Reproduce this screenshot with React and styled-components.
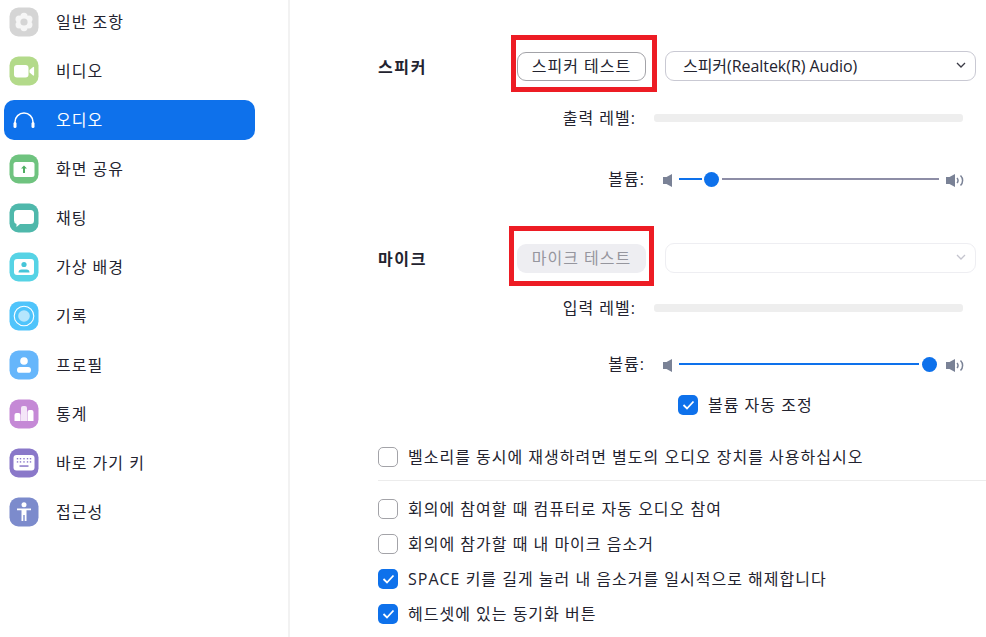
import React from 'react';
import styled, { createGlobalStyle } from 'styled-components';

const Global = createGlobalStyle`
  html, body { margin: 0; padding: 0; background: #fff; height: 637px; overflow: hidden; }
  body { font-family: "Open Sans", "Noto Sans CJK KR", sans-serif; font-size: 16px; color: #23232f; }
  * { box-sizing: border-box; }
`;

const Page = styled.div`
  display: flex;
  width: 986px;
  height: 637px;
  overflow: hidden;
`;

const Sidebar = styled.nav`
  width: 290px;
  flex: none;
  border-right: 2px solid #f2f2f2;
  padding: 2px 33px 0 4px;
  display: flex;
  flex-direction: column;
  gap: 9px;
`;

const NavItem = styled.div`
  height: 40px;
  flex: none;
  display: flex;
  align-items: center;
  gap: 17px;
  padding-left: 5px;
  border-radius: 10px;
  background: ${p => (p.$active ? '#0e71eb' : 'transparent')};
  color: ${p => (p.$active ? '#fff' : '#23232f')};
  letter-spacing: 1px;
`;

const NavLabel = styled.span`
  margin-top: -2px;
`;

const IconSvg = styled.svg`
  width: 30px;
  height: 30px;
  flex: none;
  display: block;
`;

const Main = styled.main`
  flex: 1;
  padding: 51px 10px 0 88px;
  display: flex;
  flex-direction: column;
`;

const Row = styled.div`
  height: 30px;
  flex: none;
  display: flex;
  align-items: center;
  margin-top: ${p => p.$top || 0}px;
`;

const SectionLabel = styled.div`
  width: 139px;
  flex: none;
  font-weight: 700;
  letter-spacing: 1.6px;
`;

const ButtonWrap = styled.div`
  position: relative;
  width: 129px;
  height: 29px;
  flex: none;
  margin-right: 19px;
`;

const TestButton = styled.button`
  width: 100%;
  height: 100%;
  padding: 0 0 2px;
  font: inherit;
  letter-spacing: 1px;
  border-radius: 9px;
  border: ${p => (p.disabled ? '0' : '1px solid #a3a3a8')};
  background: ${p => (p.disabled ? '#eeeef2' : '#fff')};
  color: ${p => (p.disabled ? '#96969e' : '#23232f')};
`;

const RedBox = styled.div`
  position: absolute;
  left: ${p => p.$left}px;
  top: ${p => p.$top}px;
  width: ${p => p.$w}px;
  height: ${p => p.$h}px;
  border: 5px solid #ed1c24;
  pointer-events: none;
`;

const Select = styled.div`
  flex: none;
  width: 311px;
  height: 30px;
  border: 1px solid ${p => (p.$disabled ? '#eeeef2' : '#c9c9d3')};
  border-radius: 9px;
  display: flex;
  align-items: center;
  justify-content: space-between;
  padding: 0 9px 2px 17px;
  letter-spacing: -0.05px;
`;

const FieldLabel = styled.div`
  width: ${p => p.$w}px;
  flex: none;
  text-align: right;
  letter-spacing: 1px;
  margin-top: -2px;
`;

const LevelBar = styled.div`
  width: 309px;
  height: 8px;
  margin-left: 18px;
  border-radius: 3px;
  background: #eeeeee;
`;

const Slider = styled.div`
  display: flex;
  align-items: center;
  margin-left: 18px;
`;

const VolIcon = styled.svg`
  flex: none;
  display: block;
  height: 13px;
  margin-top: 2px;
`;

const Track = styled.div`
  width: 260px;
  height: 16px;
  margin: 0 6.5px 0 7px;
  display: flex;
  align-items: center;
`;

const TrackFill = styled.div`
  height: 2.5px;
  background: ${p => (p.$on ? '#0e71eb' : '#8d8da6')};
  flex: ${p => (p.$grow ? 1 : 'none')};
`;

const Thumb = styled.div`
  width: 15px;
  height: 15px;
  border-radius: 50%;
  background: #0e71eb;
  flex: none;
  margin: 0 2.5px;
`;

const Box = styled.span`
  width: 20px;
  height: 20px;
  flex: none;
  border-radius: 5px;
  border: ${p => (p.$on ? '0' : '1.5px solid #a3a3a8')};
  background: ${p => (p.$on ? '#0e71eb' : '#fff')};
  display: flex;
  align-items: center;
  justify-content: center;
`;

const CheckRow = styled(Row)`
  gap: 10px;
  padding-left: ${p => p.$indent || 0}px;
  letter-spacing: 1px;
`;

const CheckText = styled.span`
  margin-top: -2px;
`;

const Divider = styled.div`
  height: 1px;
  flex: none;
  margin: 8px -10px 13px 0;
  background: #ececec;
`;

const Tile = ({ color, children }) => (
  <IconSvg viewBox="0 0 30 30">
    <rect x="0.5" y="0.5" width="29" height="29" rx="9" fill={color} />
    {children}
  </IconSvg>
);

const petals = [0, 60, 120, 180, 240, 300];
const icons = {
  gear: (
    <Tile color="#d5d5d5">
      {petals.map(a => (
        <circle key={a} cx={15 + 5.6 * Math.cos((a * Math.PI) / 180 + Math.PI / 6)} cy={15 + 5.6 * Math.sin((a * Math.PI) / 180 + Math.PI / 6)} r="3.6" fill="#f6f6f6" />
      ))}
      <circle cx="15" cy="15" r="7" fill="#f6f6f6" />
      <circle cx="15" cy="15" r="3.6" fill="#d5d5d5" />
    </Tile>
  ),
  video: (
    <Tile color="#b3da8a">
      <rect x="5" y="9" width="14.5" height="12.5" rx="3" fill="#fff" />
      <path d="M20.5 14l3.6-3a.6.6 0 0 1 1 .5v7.5a.6.6 0 0 1-1 .5l-3.6-3z" fill="#fff" />
    </Tile>
  ),
  headphones: (
    <IconSvg viewBox="0 0 30 30">
      <path d="M6 19v-2a9 9 0 0 1 18 0v2" fill="none" stroke="#fff" strokeWidth="1.5" />
      <rect x="4.500" y="17" width="3" height="6" rx="1.500" fill="#fff" />
      <rect x="22.500" y="17" width="3" height="6" rx="1.500" fill="#fff" />
    </IconSvg>
  ),
  share: (
    <Tile color="#6fc37f">
      <rect x="4.500" y="8" width="21" height="15" rx="2.500" fill="#fff" />
      <path d="M15 11.500l3 3h-2v4.500h-2v-4.500h-2z" fill="#4fae62" />
    </Tile>
  ),
  chat: (
    <Tile color="#4fb8ab">
      <path d="M8.5 7h13A3.5 3.5 0 0 1 25 10.5v7a3.5 3.5 0 0 1-3.500 3.5H11l-3.500 3v-3.100A3.500 3.500 0 0 1 5 17.500v-7A3.500 3.500 0 0 1 8.500 7z" fill="#fff" />
    </Tile>
  ),
  background: (
    <Tile color="#56d3e5">
      <rect x="5" y="7" width="20" height="16" rx="3" fill="#fff" />
      <circle cx="15" cy="12.500" r="2.600" fill="#46c5d8" />
      <path d="M9.500 20.500a3 3 0 0 1 3-3h5a3 3 0 0 1 3 3z" fill="#46c5d8" />
    </Tile>
  ),
  record: (
    <Tile color="#4fc4fb">
      <circle cx="15" cy="15" r="9.800" fill="none" stroke="#fff" strokeWidth="1.100" />
      <circle cx="15" cy="15" r="5.800" fill="#b5e6fd" />
    </Tile>
  ),
  profile: (
    <Tile color="#66b6fb">
      <circle cx="15" cy="11" r="3.800" fill="#fff" />
      <rect x="8" y="17" width="14" height="5.800" rx="2.900" fill="#fff" />
    </Tile>
  ),
  stats: (
    <Tile color="#c589d6">
      <path d="M5.500 22v-6a2 2 0 0 1 2-2h2a2 2 0 0 1 2 2v6z" fill="#fff" />
      <path d="M12 22V9a2 2 0 0 1 2-2h2a2 2 0 0 1 2 2v13z" fill="#f4e6f8" />
      <path d="M18.500 22V13a2 2 0 0 1 2-2h2a2 2 0 0 1 2 2v9z" fill="#fff" />
    </Tile>
  ),
  keyboard: (
    <Tile color="#8a78c9">
      <rect x="4.500" y="7" width="21" height="15.500" rx="3" fill="#fff" />
      {[8.500, 11.500, 15, 18.500, 21.500].map(x => (
        <g key={x} fill="#8a78c9">
          <rect x={x - 0.700} y="10" width="1.400" height="1.400" />
          <rect x={x - 0.700} y="13.200" width="1.400" height="1.400" />
        </g>
      ))}
      <rect x="10.500" y="17.300" width="9" height="1.500" fill="#8a78c9" />
    </Tile>
  ),
  access: (
    <Tile color="#7c8bcc">
      <circle cx="15" cy="7.800" r="2.500" fill="#fff" />
      <path d="M8 11.500h14v1.800h-4.500V24h-1.800v-6h-1.400v6h-1.800V13.300H8z" fill="#fff" />
    </Tile>
  ),
};

const navItems = [
  ['gear', '일반 조항'],
  ['video', '비디오'],
  ['headphones', '오디오', true],
  ['share', '화면 공유'],
  ['chat', '채팅'],
  ['background', '가상 배경'],
  ['record', '기록'],
  ['profile', '프로필'],
  ['stats', '통계'],
  ['keyboard', '바로 가기 키'],
  ['access', '접근성'],
];

const Chevron = ({ color }) => (
  <svg width="10" height="6" viewBox="0 0 10 6">
    <path d="M1 1l4 4 4-4" fill="none" stroke={color} strokeWidth="1.300" />
  </svg>
);

const Tick = () => (
  <svg width="13" height="10" viewBox="0 0 13 10">
    <path d="M1.500 5l3.500 3.500L11.500 1.500" fill="none" stroke="#fff" strokeWidth="1.800" />
  </svg>
);

const SpeakerLow = () => (
  <VolIcon width="9" viewBox="0 0 9 13">
    <path d="M0 3h3.500L9 0v13L3.500 10H0z" fill="#7a8296" />
  </VolIcon>
);

const SpeakerHigh = () => (
  <VolIcon width="18" viewBox="0 0 18 13">
    <path d="M0 3h3.500L9 0v13L3.500 10H0z" fill="#7a8296" />
    <path d="M11 4a3.500 3.500 0 0 1 0 5M14.500 1.500a7 7 0 0 1 0 10" fill="none" stroke="#7a8296" strokeWidth="1.500" />
  </VolIcon>
);

const Volume = ({ before, top }) => (
  <Row $top={top}>
    <FieldLabel $w={267}>볼륨:</FieldLabel>
    <Slider>
      <SpeakerLow />
      <Track>
        <TrackFill $on style={{ width: before }} />
        <Thumb />
        <TrackFill $grow />
      </Track>
      <SpeakerHigh />
    </Slider>
  </Row>
);

const Check = ({ on, top, indent, children }) => (
  <CheckRow $top={top} $indent={indent}>
    <Box $on={on}>{on && <Tick />}</Box>
    <CheckText>{children}</CheckText>
  </CheckRow>
);

export default function App() {
  return (
    <Page>
      <Global />
      <Sidebar>
        {navItems.map(([icon, label, active]) => (
          <NavItem key={label} $active={active}>
            {icons[icon]}
            <NavLabel>{label}</NavLabel>
          </NavItem>
        ))}
      </Sidebar>
      <Main>
        <Row>
          <SectionLabel>스피커</SectionLabel>
          <ButtonWrap>
            <TestButton>스피커 테스트</TestButton>
            <RedBox $left={-6} $top={-17} $w={146} $h={57} />
          </ButtonWrap>
          <Select>
            <span>스피커(Realtek(R) Audio)</span>
            <Chevron color="#3a3a45" />
          </Select>
        </Row>
        <Row $top={22}>
          <FieldLabel $w={258}>출력 레벨:</FieldLabel>
          <LevelBar />
        </Row>
        <Volume top={31} before={22.5} />
        <Row $top={49}>
          <SectionLabel>마이크</SectionLabel>
          <ButtonWrap>
            <TestButton disabled>마이크 테스트</TestButton>
            <RedBox $left={-8} $top={-18} $w={145} $h={60} />
          </ButtonWrap>
          <Select $disabled>
            <span />
            <Chevron color="#c4c4ce" />
          </Select>
        </Row>
        <Row $top={20}>
          <FieldLabel $w={258}>입력 레벨:</FieldLabel>
          <LevelBar />
        </Row>
        <Volume top={26} before={240} />
        <Check on top={11} indent={300}>볼륨 자동 조정</Check>
        <Check top={22}>벨소리를 동시에 재생하려면 별도의 오디오 장치를 사용하십시오</Check>
        <Divider />
        <Check>회의에 참여할 때 컴퓨터로 자동 오디오 참여</Check>
        <Check top={5}>회의에 참가할 때 내 마이크 음소거</Check>
        <Check on top={5}>SPACE 키를 길게 눌러 내 음소거를 일시적으로 해제합니다</Check>
        <Check on top={5}>헤드셋에 있는 동기화 버튼</Check>
      </Main>
    </Page>
  );
}
